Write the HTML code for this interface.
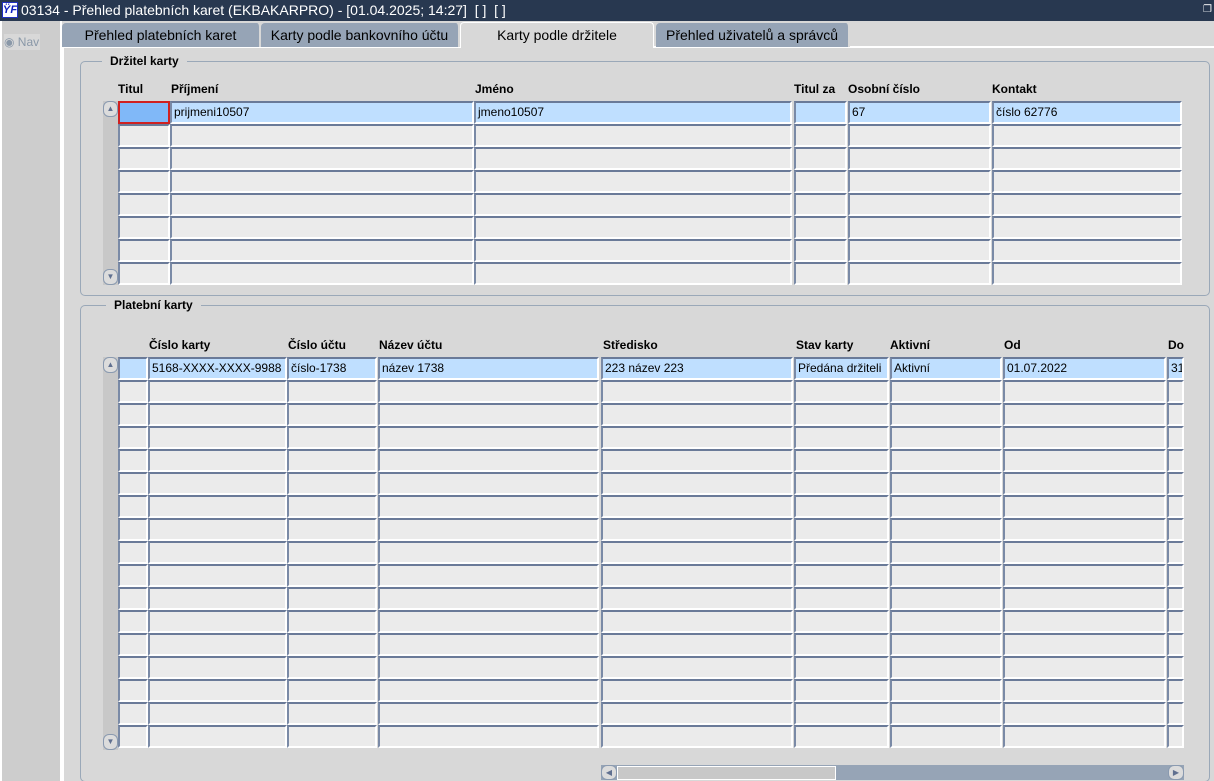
<!DOCTYPE html>
<html style="overflow:hidden"><head><meta charset="utf-8"><style>
*{box-sizing:border-box;margin:0;padding:0}
html,body{width:1214px;height:781px;overflow:hidden}
body{background:#d8d8d8;font-family:"Liberation Sans",sans-serif;font-size:12px;position:relative;color:#000}
.a{position:absolute}
#title{left:0;top:0;width:1214px;height:21px;background:#283850;color:#fff;font-size:14px;line-height:21px;padding-left:21px;white-space:nowrap}
#logo{left:2px;top:2px;width:16px;height:16px;background:#fff;border:1px solid #2030c0;color:#1020c0;font:bold italic 11px "Liberation Sans";line-height:14px;text-align:center}
#left{left:0;top:21px;width:62px;height:760px;background:#cdcdcd;border-left:2px solid #fff;border-right:2px solid #fff}
.tab{top:23px;height:24px;background:#96a4b6;font-size:14px;line-height:24px;text-align:center;border-radius:4px 4px 0 0;border-right:2px solid #d8d8d8}
.frame{border:1px solid #9aa8b8;border-radius:5px}
.lg{background:#d8d8d8;font-weight:bold;font-size:12px;padding:0 8px}
.h{font-weight:bold;font-size:12px}
.c{background:#ebebeb;border-top:2px solid #6a7a98;border-left:2px solid #7a8aa6;border-right:2px solid #fff;border-bottom:2px solid #fff;height:23px;font-size:12px;line-height:19px;padding-left:2px;white-space:nowrap;overflow:hidden}
.s{background:#bfdfff}
.vs{background:#c8c8c8;width:15px}
.arr{width:15px;height:16px;background:#dcdcdc;border:1px solid #8a9ab0;border-radius:6px;font-size:8px;color:#607090;text-align:center;line-height:14px}
</style></head><body>
<div id="title" class="a">03134 - Přehled platebních karet (EKBAKARPRO) - [01.04.2025; 14:27]&nbsp; [ ]&nbsp; [ ]</div>
<div id="logo" class="a">ŸF</div>
<div class="a" style="right:2px;top:4px;color:#fff;font-size:10px">❐</div>
<div id="left" class="a"></div>
<div class="a" style="left:4px;top:34px;width:36px;height:16px;background:#d8d8d8;color:#8a98a8;font-size:12px;line-height:16px">◉ Nav</div>
<div class="a" style="left:62px;top:46px;width:1152px;height:2px;background:#fff"></div>
<div class="a tab" style="left:62px;width:199px">Přehled platebních karet</div>
<div class="a tab" style="left:261px;width:199px">Karty podle bankovního účtu</div>
<div class="a tab" style="left:460px;top:22px;height:26px;width:194px;background:#d8d8d8;border:1px solid #fff;border-bottom:none">Karty podle držitele</div>
<div class="a tab" style="left:656px;width:194px">Přehled uživatelů a správců</div>
<div class="a" style="left:62px;top:48px;width:2px;height:733px;background:#fff"></div>

<div class="a frame" style="left:80px;top:61px;width:1130px;height:235px"></div>
<div class="a lg" style="left:102px;top:54px;line-height:15px">Držitel karty</div>
<div class="a h" style="left:118px;top:82px">Titul</div>
<div class="a h" style="left:171px;top:82px">Příjmení</div>
<div class="a h" style="left:475px;top:82px">Jméno</div>
<div class="a h" style="left:794px;top:82px">Titul za</div>
<div class="a h" style="left:848px;top:82px">Osobní číslo</div>
<div class="a h" style="left:992px;top:82px">Kontakt</div>

<div class="a frame" style="left:80px;top:305px;width:1130px;height:477px"></div>
<div class="a lg" style="left:106px;top:298px;line-height:15px">Platební karty</div>
<div class="a h" style="left:149px;top:338px">Číslo karty</div>
<div class="a h" style="left:288px;top:338px">Číslo účtu</div>
<div class="a h" style="left:379px;top:338px">Název účtu</div>
<div class="a h" style="left:603px;top:338px">Středisko</div>
<div class="a h" style="left:796px;top:338px">Stav karty</div>
<div class="a h" style="left:890px;top:338px">Aktivní</div>
<div class="a h" style="left:1004px;top:338px">Od</div>
<div class="a h" style="left:1168px;top:338px">Do</div>
<div class="a" style="left:1184px;top:320px;width:24px;height:440px;background:#d8d8d8;z-index:5"></div>

<div id="g"></div>

<div class="a c s" style="left:118px;top:101px;width:52px;background:#80b8f8;border:2px solid #d02020"></div>
<div class="a c s" style="left:170px;top:101px;width:304px">prijmeni10507</div>
<div class="a c s" style="left:474px;top:101px;width:318px">jmeno10507</div>
<div class="a c s" style="left:794px;top:101px;width:53px"></div>
<div class="a c s" style="left:848px;top:101px;width:143px">67</div>
<div class="a c s" style="left:992px;top:101px;width:190px">číslo 62776</div>

<div class="a c s" style="left:118px;top:357px;width:30px"></div>
<div class="a c s" style="left:148px;top:357px;width:139px">5168-XXXX-XXXX-9988</div>
<div class="a c s" style="left:287px;top:357px;width:90px">číslo-1738</div>
<div class="a c s" style="left:378px;top:357px;width:221px">název 1738</div>
<div class="a c s" style="left:601px;top:357px;width:192px">223 název 223</div>
<div class="a c s" style="left:794px;top:357px;width:95px">Předána držiteli</div>
<div class="a c s" style="left:890px;top:357px;width:112px">Aktivní</div>
<div class="a c s" style="left:1003px;top:357px;width:163px">01.07.2022</div>
<div class="a c s" style="left:1167px;top:357px;width:17px">31</div>

<div class="a vs" style="left:103px;top:101px;height:184px"></div>
<div class="a arr" style="left:103px;top:101px">▲</div>
<div class="a arr" style="left:103px;top:269px">▼</div>
<div class="a vs" style="left:103px;top:357px;height:393px"></div>
<div class="a arr" style="left:103px;top:357px">▲</div>
<div class="a arr" style="left:103px;top:734px">▼</div>

<div class="a" style="left:601px;top:765px;width:583px;height:15px;background:#96a4b6"></div>
<div class="a" style="left:617px;top:766px;width:219px;height:14px;background:#c8c8c8;border:1px solid #fff"></div>
<div class="a" style="left:601px;top:765px;width:16px;height:15px;background:#dcdcdc;border:1px solid #8a9ab0;border-radius:6px;font-size:8px;line-height:13px;text-align:center;color:#607090">◀</div>
<div class="a" style="left:1168px;top:765px;width:16px;height:15px;background:#dcdcdc;border:1px solid #8a9ab0;border-radius:6px;font-size:8px;line-height:13px;text-align:center;color:#607090">▶</div>

<script>
var g=document.getElementById('g'),h='';
var c1=[[118,52],[170,304],[474,318],[794,53],[848,143],[992,190]];
for(var r=1;r<8;r++)c1.forEach(function(c){h+='<div class="a c" style="left:'+c[0]+'px;top:'+(101+r*23)+'px;width:'+c[1]+'px"></div>';});
var c2=[[118,30],[148,139],[287,90],[378,221],[601,192],[794,95],[890,112],[1003,163],[1167,17]];
for(var r=1;r<17;r++)c2.forEach(function(c){h+='<div class="a c" style="left:'+c[0]+'px;top:'+(357+r*23)+'px;width:'+c[1]+'px"></div>';});
g.innerHTML=h;
</script>
</body></html>
